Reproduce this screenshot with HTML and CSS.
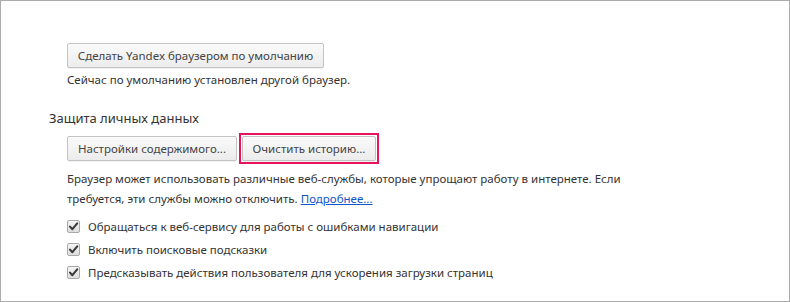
FILE: index.html
```html
<!DOCTYPE html>
<html lang="ru">
<head>
<meta charset="utf-8">
<link rel="stylesheet" href="styles.css">
</head>
<body>
<div class="frame">
  <div class="indent block-default">
    <button class="btn btn-default">Сделать Yandex браузером по умолчанию</button>
    <div class="note">Сейчас по умолчанию установлен другой браузер.</div>
  </div>
  <div class="section-title">Защита личных данных</div>
  <div class="indent">
    <div class="btn-row">
      <button class="btn btn-content">Настройки содержимого...</button>
      <span class="highlight"><button class="btn btn-clear">Очистить историю...</button></span>
    </div>
    <p class="desc">Браузер может использовать различные веб-службы, которые упрощают работу в интернете. Если требуется, эти службы можно отключить. <a href="#">Подробнее...</a></p>
    <ul class="checks">
      <li><span class="cb"><svg viewBox="0 0 13 13" width="13" height="13"><path d="M3 6.6 L5.4 9.2 L10.2 3.4" fill="none" stroke="#3a3a3a" stroke-width="2.1" stroke-linecap="round" stroke-linejoin="round"/></svg></span>Обращаться к веб-сервису для работы с ошибками навигации</li>
      <li><span class="cb"><svg viewBox="0 0 13 13" width="13" height="13"><path d="M3 6.6 L5.4 9.2 L10.2 3.4" fill="none" stroke="#3a3a3a" stroke-width="2.1" stroke-linecap="round" stroke-linejoin="round"/></svg></span>Включить поисковые подсказки</li>
      <li><span class="cb"><svg viewBox="0 0 13 13" width="13" height="13"><path d="M3 6.6 L5.4 9.2 L10.2 3.4" fill="none" stroke="#3a3a3a" stroke-width="2.1" stroke-linecap="round" stroke-linejoin="round"/></svg></span>Предсказывать действия пользователя для ускорения загрузки страниц</li>
    </ul>
  </div>
</div>
</body>
</html>
```
FILE: styles.css
```css
html, body {
  margin: 0;
  padding: 0;
  background: #fff;
}
.frame {
  width: 790px;
  height: 302px;
  box-sizing: border-box;
  border: 1px solid #ababab;
  font-family: "Noto Sans", "Open Sans", sans-serif;
  font-size: 11.5px;
  color: #333;
  padding-top: 42px;
}
.indent {
  padding-left: 66px;
}
.btn {
  font-family: inherit;
  font-size: 11.5px;
  color: #444;
  height: 25px;
  padding: 0 8px;
  border: 1px solid #c3c3c3;
  border-radius: 2px;
  background: linear-gradient(#fafafa, #ececec);
  box-shadow: 0 1px 0 rgba(0,0,0,0.06);
  margin: 0;
  line-height: 23px;
  white-space: nowrap;
  box-sizing: border-box;
}
.btn-default {
  width: 257px;
}
.note {
  margin-top: 4px;
  line-height: 16px;
}
.section-title {
  padding-left: 48px;
  margin-top: 22px;
  line-height: 16px;
  font-size: 13px;
}
.btn-row {
  display: flex;
  align-items: center;
  gap: 2px;
  margin-top: 7px;
}
.btn-content {
  width: 170px;
}
.highlight {
  display: inline-flex;
  border: 2px solid #e8145a;
  padding: 1px;
}
.btn-clear {
  width: 134px;
}
.desc {
  margin: 5px 0 0;
  width: 580px;
  line-height: 20px;
}
.desc a {
  color: #1155cc;
  text-decoration: underline;
}
.checks {
  list-style: none;
  margin: 6px 0 0;
  padding: 0;
}
.checks li {
  display: flex;
  align-items: center;
  height: 23px;
  gap: 8px;
}
.cb {
  display: inline-flex;
  width: 13px;
  height: 13px;
  box-sizing: border-box;
  border: 1px solid #a9a9a9;
  border-radius: 2px;
  background: linear-gradient(#f4f4f4, #dedede);
  position: relative;
}
.cb svg {
  position: absolute;
  left: -1px;
  top: -1px;
}
```
